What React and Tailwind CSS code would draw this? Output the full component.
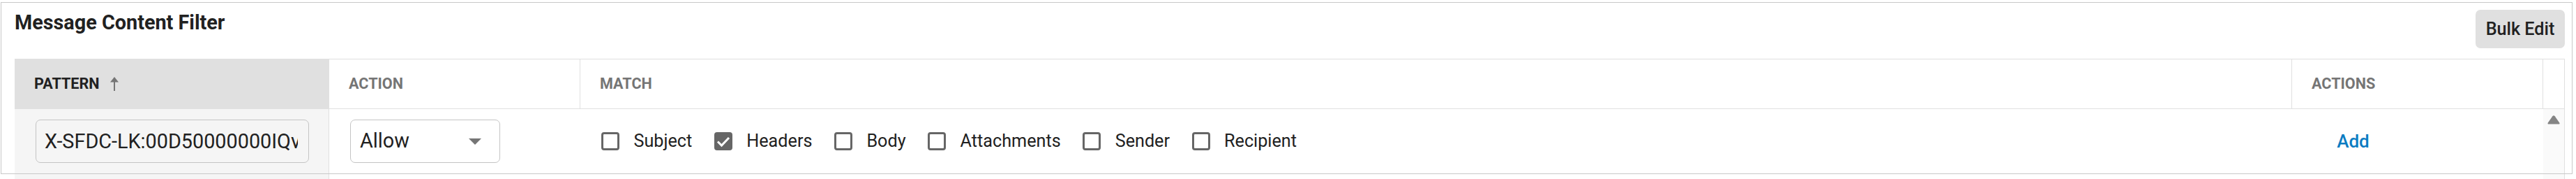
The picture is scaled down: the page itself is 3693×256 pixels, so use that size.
import React from 'react';

const matchOptions = [
  { label: 'Subject', checked: false },
  { label: 'Headers', checked: true },
  { label: 'Body', checked: false },
  { label: 'Attachments', checked: false },
  { label: 'Sender', checked: false },
  { label: 'Recipient', checked: false },
];

const SortArrow = () => (
  <svg width="12" height="20" viewBox="0 0 12 20" className="shrink-0">
    <path d="M6 0 L12 7.5 L0 7.5 Z" fill="#757575" />
    <rect x="5" y="6" width="2" height="14" fill="#757575" />
  </svg>
);

const Checkbox = ({ checked }) =>
  checked ? (
    <span className="flex h-[26px] w-[26px] shrink-0 items-center justify-center rounded-[4px] bg-[#666666]">
      <svg width="26" height="26" viewBox="0 0 26 26">
        <path d="M5 13.5 L10.5 19 L21 8" fill="none" stroke="#ffffff" strokeWidth="3" />
      </svg>
    </span>
  ) : (
    <span className="h-[26px] w-[26px] shrink-0 rounded-[4px] border-[3px] border-[#666666]" />
  );

const HeaderCell = ({ className = '', children }) => (
  <div className={`flex h-full items-center border-r border-[#e0e0e0] pl-[28px] text-[21.6px] font-bold uppercase ${className}`}>
    {children}
  </div>
);

const Table = () => (
  <div className="w-[3656px] border-t border-r border-[#e0e0e0]">
    {/* header */}
    <div className="flex h-[71px] border-b border-[#e0e0e0]">
      <HeaderCell className="w-[451px] gap-[15px] bg-[#e0e0e0] text-[#212121]">
        <span>Pattern</span>
        <SortArrow />
      </HeaderCell>
      <HeaderCell className="w-[360px] text-[#757575]">Action</HeaderCell>
      <HeaderCell className="w-[2454px] text-[#757575]">Match</HeaderCell>
      <HeaderCell className="w-[360px] text-[#757575]">Actions</HeaderCell>
      <div className="h-full w-[30px]" />
    </div>

    {/* first row */}
    <div className="flex h-[92px]">
      <div className="flex w-[451px] items-center border-r border-[#e0e0e0] bg-[#f5f5f5] pl-[30px]">
        <input
          readOnly
          value="X-SFDC-LK:00D50000000IQvAEAW"
          className="h-[62px] w-[392px] rounded-[7px] border border-[#c4c4c4] bg-transparent pl-[12px] pr-[15px] text-[28.8px] text-[#212121] outline-none"
        />
      </div>
      <div className="flex w-[360px] items-center pl-[30px]">
        <div className="flex h-[62px] w-[215px] items-center justify-between rounded-[7px] border border-[#c4c4c4] bg-white pl-[13px] pr-[26px]">
          <span className="text-[28.8px] text-[#212121]">Allow</span>
          <svg width="18" height="9" viewBox="0 0 18 9">
            <path d="M0 0 L18 0 L9 9 Z" fill="#757575" />
          </svg>
        </div>
      </div>
      <div className="flex w-[2454px] items-center gap-[31.5px] pl-[30px]">
        {matchOptions.map((opt) => (
          <label key={opt.label} className="flex items-center gap-[20.5px]">
            <Checkbox checked={opt.checked} />
            <span className="text-[25.2px] text-[#212121]">{opt.label}</span>
          </label>
        ))}
      </div>
      <div className="flex w-[360px] items-center pl-[30px]">
        <button className="w-[115px] text-center text-[26px] font-medium text-[#0b7cc2]">Add</button>
      </div>
      <div className="w-[30px] bg-[#fafafa] pl-[6px] pt-[9px]">
        <svg width="18" height="13" viewBox="0 0 18 13">
          <path d="M7.3 1.2 Q9 -0.6 10.7 1.2 L17.2 10.6 Q18.2 12.6 16 12.6 L2 12.6 Q-0.2 12.6 0.8 10.6 Z" fill="#858585" />
        </svg>
      </div>
    </div>

    {/* next row, cut off by the card */}
    <div className="flex h-[92px]">
      <div className="w-[451px] border-r border-[#e0e0e0] bg-[#f5f5f5]" />
      <div className="w-[360px]" />
      <div className="w-[2454px]" />
      <div className="w-[360px]" />
      <div className="w-[30px] bg-[#fafafa]" />
    </div>
  </div>
);

export default function App() {
  return (
    <div className="h-[256px] w-[3693px] overflow-hidden bg-white font-['Roboto',sans-serif] text-[#212121]">
      <div className="relative ml-[1px] mt-[3px] h-[246px] w-[3687px] pl-[20px] pr-[11px]">
        <div className="pointer-events-none absolute inset-0 z-10 border border-[#c8c8c8]" />
        <div className="flex h-[81px] items-start justify-between pt-[11px]">
          <h2 className="mt-[2px] text-[28.8px] font-bold leading-[33.75px]">Message Content Filter</h2>
          <button className="h-[55px] w-[128px] rounded-[7px] bg-[#e0e0e0] text-[25.2px] font-medium text-[#212121]">
            Bulk Edit
          </button>
        </div>
        <Table />
      </div>
    </div>
  );
}
